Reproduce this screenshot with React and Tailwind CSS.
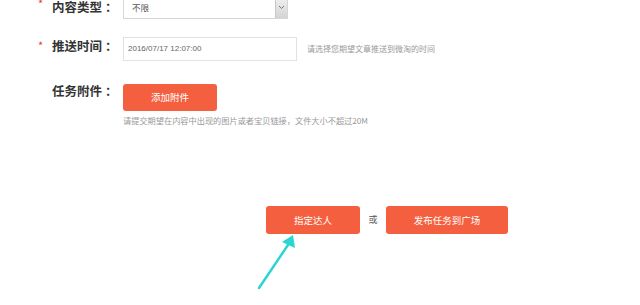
import React from 'react';

const FONT = { fontFamily: '"Noto Sans CJK SC", "Liberation Sans", sans-serif' };
const LATIN = { fontFamily: '"Liberation Sans", "Noto Sans CJK SC", sans-serif' };

const Row = ({ required, label, children, className = '', labelClass = '' }) => (
  <div className={`flex items-start ${className}`}>
    <span className="w-[14px] text-[#e4393c] text-[11px] leading-none pt-[3px]">{required ? '*' : ''}</span>
    <span className={`w-[71px] text-[12.5px] font-bold text-[#333] leading-[18px] whitespace-nowrap ${labelClass}`}>
      {label}
      <span className="ml-[3px]">：</span>
    </span>
    <div>{children}</div>
  </div>
);

export default function App() {
  return (
    <div className="relative w-[640px] h-[305px] overflow-hidden bg-white" style={FONT}>
      <div className="pl-[38px] mt-[-5px]">
        {/* 内容类型 */}
        <Row required label="内容类型" labelClass="pt-[3px]">
          <div className="flex w-[165px] h-[24px] border border-[#d6d6d6] bg-white">
            <span className="flex-1 pl-[8px] text-[8.5px] text-[#555] leading-[22px]">不限</span>
            <span className="w-[12px] h-full border-l border-[#c8c8c8] bg-gradient-to-b from-[#f2f2f2] to-[#d4d4d4] flex items-center justify-center">
              <svg width="7" height="5" viewBox="0 0 7 5">
                <path d="M1 1l2.5 2.5L6 1" fill="none" stroke="#777" strokeWidth="1" />
              </svg>
            </span>
          </div>
        </Row>

        {/* 推送时间 */}
        <Row required label="推送时间" className="mt-[18px]">
          <div className="flex items-center">
            <div className="w-[174px] h-[24px] border border-[#e2e2e2] pl-[4px] text-[8px] text-[#666] leading-[22px]" style={LATIN}>
              2016/07/17 12:07:00
            </div>
            <span className="ml-[10px] text-[8px] text-[#999]">请选择您期望文章推送到微淘的时间</span>
          </div>
        </Row>

        {/* 任务附件 */}
        <Row label="任务附件" className="mt-[21px]">
          <button className="w-[94px] h-[27px] rounded-[3px] bg-[#f4603f] text-white text-[9.5px] mt-[1px]">
            添加附件
          </button>
          <p className="mt-[3px] text-[8.2px] text-[#999] leading-[12px] whitespace-nowrap">
            请提交期望在内容中出现的图片或者宝贝链接，文件大小不超过20M
          </p>
        </Row>
      </div>

      {/* actions */}
      <div className="flex items-center mt-[80px] pl-[266px]">
        <button className="w-[94px] h-[28px] rounded-[3px] bg-[#f4603f] text-white text-[9.5px]">指定达人</button>
        <span className="w-[26px] text-center text-[9px] text-[#555]">或</span>
        <button className="w-[122px] h-[28px] rounded-[3px] bg-[#f4603f] text-white text-[9.5px]">发布任务到广场</button>
      </div>

      {/* annotation arrow */}
      <svg className="absolute left-[252px] top-[228px]" width="50" height="66" viewBox="0 0 50 66">
        <path d="M7 60 L38 14" stroke="#2dd4d4" strokeWidth="2.5" strokeLinecap="round" />
        <path d="M41 7 L30 14 L43 20 Z" fill="#2dd4d4" />
      </svg>
    </div>
  );
}
